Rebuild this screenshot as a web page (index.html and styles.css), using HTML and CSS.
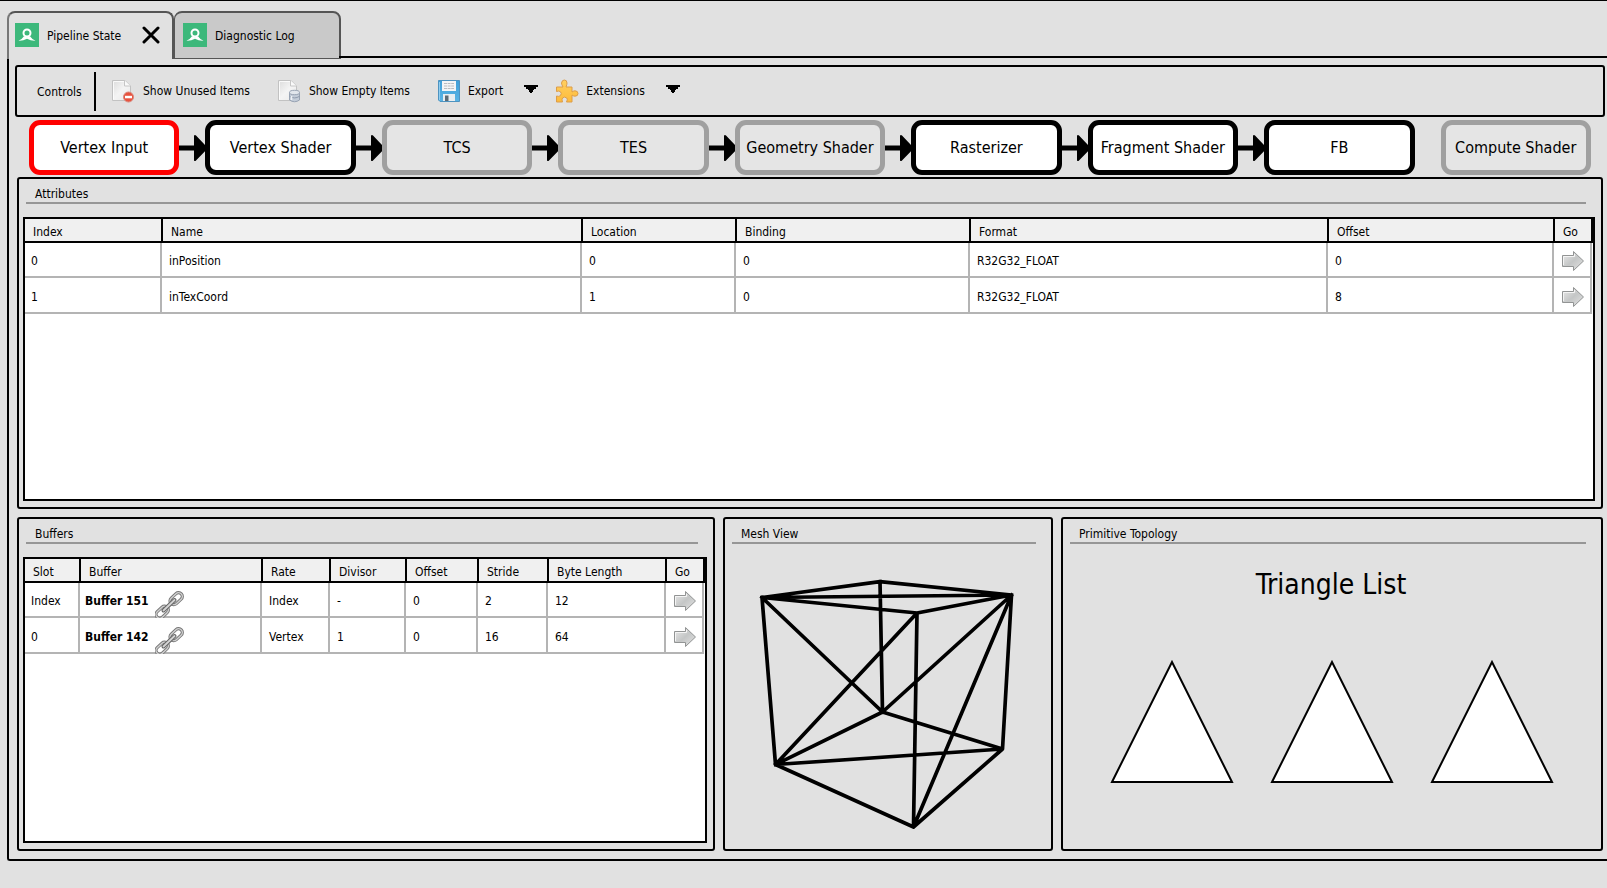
FILE: index.html
```html
<!DOCTYPE html>
<html lang="en">
<head>
<meta charset="utf-8">
<title>Pipeline State</title>
<link rel="stylesheet" href="styles.css">
</head>
<body class="app">
<svg class="defs" width="0" height="0" aria-hidden="true">
  <defs>
    <linearGradient id="page-fill" x1="0" y1="0" x2="1" y2="1">
      <stop offset="0" stop-color="#dcdcdc"/><stop offset=".5" stop-color="#f4f4f4"/><stop offset="1" stop-color="#e9e9e9"/>
    </linearGradient>
    <linearGradient id="go-fill" x1="0" y1="0" x2="1" y2="1">
      <stop offset="0" stop-color="#ececec"/><stop offset=".5" stop-color="#c4c6c6"/><stop offset="1" stop-color="#e4e4e4"/>
    </linearGradient>
    <linearGradient id="puzzle-fill" x1="0" y1="0" x2="0" y2="1">
      <stop offset="0" stop-color="#ffd061"/><stop offset="1" stop-color="#fdbb3b"/>
    </linearGradient>
    <linearGradient id="disk-fill" x1="0" y1="0" x2="0" y2="1">
      <stop offset="0" stop-color="#3f9fd8"/><stop offset="1" stop-color="#5bb4e4"/>
    </linearGradient>
  </defs>
  <symbol id="logo" viewBox="0 0 24 24">
    <path fill="#3db87b" d="M0 0h24v24H0z"/>
    <circle cx="12" cy="10" r="3.500" fill="none" stroke="#fff" stroke-width="2"/>
    <path fill="#fff" d="M3.500 17.700Q7 16.500 9 13.300L12 14.300 15 13.300Q17 16.500 20.500 17.700 16 18 12 15.700 8 18 3.500 17.700z"/>
  </symbol>
  <symbol id="page" viewBox="0 0 24 24">
    <path d="M1.500 1.500H14L19.500 7V21.500H1.500z" fill="url(#page-fill)" stroke="#c2c2c2"/>
    <path d="M2.500 20.500V2.500H13.500" fill="none" stroke="#fff" opacity=".8"/>
    <path d="M13.500 1.500V7H19.500" fill="#fafafa" stroke="#c6c6c6"/>
  </symbol>
  <symbol id="go" viewBox="0 0 24 22">
    <path d="M1.500 5.500H12.500V1.500L22.500 11 12.500 20.500V16.500H1.500z" fill="url(#go-fill)" stroke="#929494" stroke-linejoin="round"/>
    <path d="M2.500 15V6.500H13.500V4" fill="none" stroke="#f4f4f4"/>
  </symbol>
  <symbol id="chain" viewBox="0 0 29 27">
    <g fill="none" stroke-linecap="round">
      <g transform="rotate(-43 21 7.500)">
        <rect x="14" y="4" width="14" height="7.500" rx="3.700" stroke="#777" stroke-width="3.200"/>
        <rect x="14" y="4" width="14" height="7.500" rx="3.700" stroke="#d0d0d0" stroke-width="1.400"/>
      </g>
      <g transform="rotate(-43 7 21)">
        <rect x="0" y="17.500" width="14" height="7.500" rx="3.700" stroke="#777" stroke-width="3.200"/>
        <rect x="0" y="17.500" width="14" height="7.500" rx="3.700" stroke="#d0d0d0" stroke-width="1.400"/>
      </g>
      <path d="M8.500 19.500L19.500 9" stroke="#666" stroke-width="4"/>
      <path d="M8.500 19.500L19.500 9" stroke="#d4d4d4" stroke-width="1.800"/>
    </g>
  </symbol>
  <symbol id="link-arrow" viewBox="0 0 26 28">
    <path d="M0 11.500H15V1.500Q16 .5 17 1.500L29 14 17 26.500Q16 27.500 15 26.500V16.500H0z"/>
  </symbol>
  <symbol id="caret" viewBox="0 0 14 8">
    <path d="M0 0H14V2H12V4H10V5H9V7H8V8H6V7H5V5H4V4H2V2H0z"/>
  </symbol>
</svg>

<nav class="tabs">
  <div class="tab tab-active">
    <svg class="logo"><use href="#logo"/></svg>
    <a class="tab-label" href="#pipeline">Pipeline State</a>
    <button class="close" aria-label="Close tab">
      <svg viewBox="0 0 18 18"><path d="M2 2L16 16M16 2L2 16" stroke="#000" stroke-width="3" stroke-linecap="round"/></svg>
    </button>
  </div>
  <div class="tab">
    <svg class="logo"><use href="#logo"/></svg>
    <a class="tab-label" href="#log">Diagnostic Log</a>
  </div>
</nav>

<main class="frame" id="pipeline">
  <div class="toolbar">
    <span class="toolbar-title">Controls</span>
    <button class="tool">
      <svg class="icon" viewBox="0 0 24 24"><use href="#page"/><circle cx="17.500" cy="18" r="5" fill="#e8533f" stroke="#d9897e"/><path d="M14 16.800H21V19.300H14z" fill="#fff"/></svg>
      Show Unused Items
    </button>
    <button class="tool">
      <svg class="icon" viewBox="0 0 24 24"><use href="#page"/><path d="M12.500 13.500V21Q17.500 24.500 22.500 21V13.500z" fill="#c3ccd8" stroke="#98a3b3"/><ellipse cx="17.500" cy="13.500" rx="5" ry="2.200" fill="#e1e6ec" stroke="#98a3b3"/><path d="M12.500 17.300Q17.500 20.500 22.500 17.300" fill="none" stroke="#8f9bad"/><path d="M14.500 17V21" stroke="#eef1f5" stroke-width="1.500"/></svg>
      Show Empty Items
    </button>
    <button class="tool tool-menu">
      <svg class="icon" viewBox="0 0 24 24"><path d="M1.500 1.500H22.500V22.500H3L1.500 21z" fill="url(#disk-fill)" stroke="#4e93c0"/><path d="M5 2H19V12H5z" fill="#f3f5f6"/><path d="M7 4.500H17M7 7H17M7 9.500H17" stroke="#b9bdc0" stroke-dasharray="3 .6"/><path d="M6 15H18V22H6z" fill="#e9eef1"/><path d="M8 16.500H11.500V22H8z" fill="#5d6a74"/><path d="M2.500 3V21" stroke="#8fcdf0"/></svg>
      Export
    </button>
    <button class="caret" aria-label="Export options"><svg><use href="#caret"/></svg></button>
    <button class="tool tool-menu">
      <svg class="icon" viewBox="0 0 24 24"><path d="M1.500 8H8Q6.500 5.500 6.500 4 7 1 9.300 1 12 1 12 4 12 5.500 11 8H17V13Q18.500 11.800 20 11.800 23 12 23 14.500 23 17.200 20 17.200 18.500 17.200 17 16V23H11.500Q13 20.500 11.800 19 9.500 17.200 7.500 19 6.500 20.500 7.500 23H1.500V17Q4 18 5.500 16.500 7 14.500 5.500 12.800 4 11.500 1.500 12.500z" fill="url(#puzzle-fill)" stroke="#dc9d4a" stroke-linejoin="round"/></svg>
      Extensions
    </button>
    <button class="caret" aria-label="Extension options"><svg><use href="#caret"/></svg></button>
  </div>

  <div class="stages">
    <button class="stage stage-selected">Vertex Input</button>
    <svg class="link"><use href="#link-arrow"/></svg>
    <button class="stage">Vertex Shader</button>
    <svg class="link"><use href="#link-arrow"/></svg>
    <button class="stage stage-off">TCS</button>
    <svg class="link"><use href="#link-arrow"/></svg>
    <button class="stage stage-off">TES</button>
    <svg class="link"><use href="#link-arrow"/></svg>
    <button class="stage stage-off">Geometry Shader</button>
    <svg class="link"><use href="#link-arrow"/></svg>
    <button class="stage">Rasterizer</button>
    <svg class="link"><use href="#link-arrow"/></svg>
    <button class="stage">Fragment Shader</button>
    <svg class="link"><use href="#link-arrow"/></svg>
    <button class="stage">FB</button>
    <span class="link"></span>
    <button class="stage stage-off">Compute Shader</button>
  </div>

  <div class="panels">
    <section class="panel panel-wide">
      <h2 class="panel-title">Attributes</h2>
      <div class="sheet">
        <table class="grid">
          <colgroup><col class="w137"><col><col class="w154"><col class="w234"><col class="w358"><col class="w226"><col class="w38"></colgroup>
          <thead><tr><th>Index</th><th>Name</th><th>Location</th><th>Binding</th><th>Format</th><th>Offset</th><th>Go</th></tr></thead>
          <tbody>
            <tr><td>0</td><td>inPosition</td><td>0</td><td>0</td><td>R32G32_FLOAT</td><td>0</td><td><button class="go" aria-label="Go to attribute 0"><svg><use href="#go"/></svg></button></td></tr>
            <tr><td>1</td><td>inTexCoord</td><td>1</td><td>0</td><td>R32G32_FLOAT</td><td>8</td><td><button class="go" aria-label="Go to attribute 1"><svg><use href="#go"/></svg></button></td></tr>
          </tbody>
        </table>
      </div>
    </section>

    <section class="panel">
      <h2 class="panel-title">Buffers</h2>
      <div class="sheet">
        <table class="grid">
          <colgroup><col class="w55"><col><col class="w68"><col class="w76"><col class="w72"><col class="w70"><col class="w118"><col class="w38"></colgroup>
          <thead><tr><th>Slot</th><th>Buffer</th><th>Rate</th><th>Divisor</th><th>Offset</th><th>Stride</th><th>Byte Length</th><th>Go</th></tr></thead>
          <tbody>
            <tr><td>Index</td><td><a class="resource" href="#buffer-151">Buffer 151<svg><use href="#chain"/></svg></a></td><td>Index</td><td>-</td><td>0</td><td>2</td><td>12</td><td><button class="go" aria-label="Go to buffer 151"><svg><use href="#go"/></svg></button></td></tr>
            <tr><td>0</td><td><a class="resource" href="#buffer-142">Buffer 142<svg><use href="#chain"/></svg></a></td><td>Vertex</td><td>1</td><td>0</td><td>16</td><td>64</td><td><button class="go" aria-label="Go to buffer 142"><svg><use href="#go"/></svg></button></td></tr>
          </tbody>
        </table>
      </div>
    </section>

    <section class="panel">
      <h2 class="panel-title">Mesh View</h2>
      <svg class="drawing" viewBox="0 0 316 286">
        <path transform="translate(-4 -13)" fill="none" stroke="#000" stroke-width="3.700" stroke-linejoin="round" stroke-linecap="square" d="M37 53.500L155 37.700 286.500 51 192 69 37 53.500 286.500 51M37 53.500L50.500 220.500 188.500 283 277.500 205 286.500 51 188.500 283 192 69 50.500 220.500 277.500 205 157.500 168 155 37.700M37 53.500L157.500 168 286.500 51M157.500 168L50.500 220.500"/>
      </svg>
    </section>

    <section class="panel">
      <h2 class="panel-title">Primitive Topology</h2>
      <p class="topology">Triangle List</p>
      <svg class="drawing" viewBox="0 0 528 240">
        <path fill="#fff" stroke="#000" stroke-width="2" d="M45 179L105 59 165 179zM205 179L265 59 325 179zM365 179L425 59 485 179z"/>
      </svg>
    </section>
  </div>
</main>
</body>
</html>
```
FILE: styles.css
```css
* { box-sizing: border-box; }

.app {
  margin: 0;
  min-height: 100vh;
  padding: 10px 0 27px 7px;
  border-top: 1px solid #000;
  display: flex;
  flex-direction: column;
  background: #e1e1e1;
  color: #000;
  font: 12px/16px "DejaVu Sans Condensed", "DejaVu Sans", sans-serif;
}

.defs { position: absolute; }

button {
  padding: 0;
  border: 0;
  background: none;
  color: inherit;
  font: inherit;
}

a { color: inherit; text-decoration: none; }

svg { display: block; flex: none; }

/* Tabs */
.tabs { display: flex; height: 48px; }

.tabs::after {
  content: "";
  flex: 1;
  margin: 0 0 1px -2px;
  border-bottom: 2px solid #000;
}

.tab {
  width: 167px;
  padding: 0 12px 1px 8px;
  display: flex;
  align-items: center;
  gap: 8px;
  border: 2px solid #555;
  border-left-width: 1px;
  border-bottom-width: 1px;
  border-radius: 8px 8px 0 0;
  background: #c9c9c9;
}

.tab-active {
  border-left-width: 2px;
  border-left-color: #777;
  border-bottom: 0;
  padding: 0 12px 2px 6px;
  background: #e1e1e1;
}

.tab-label { flex: 1; padding-top: 1px; }

.logo { width: 24px; height: 24px; }

.close, .close svg { width: 18px; height: 18px; }

/* Main frame */
.frame {
  flex: 1;
  display: flex;
  flex-direction: column;
  padding: 6px 2px 8px 6px;
  border: solid #000;
  border-width: 0 0 2px 2px;
  border-radius: 0 0 0 3px;
}

.toolbar {
  height: 52px;
  padding: 0 20px;
  display: flex;
  align-items: center;
  border: 2px solid #000;
  border-radius: 3px;
}

.toolbar-title {
  width: 59px;
  padding-top: 1px;
  line-height: 38px;
  border-right: 2px solid #000;
  margin-right: 15px;
}

.tool {
  display: flex;
  align-items: center;
  gap: 8px;
  margin-right: 27px;
  line-height: 18px;
}

.tool-menu { gap: 7px; margin-right: 21px; }

.icon { width: 24px; height: 24px; }

.caret { margin-right: 17px; padding-bottom: 4px; }

.caret svg { width: 14px; height: 8px; }

/* Pipeline stages */
.stages {
  display: flex;
  align-items: center;
  padding: 3px 14px 2px 14px;
}

.stage {
  flex: 1;
  height: 55px;
  border: 5px solid #000;
  border-radius: 11px;
  background: #fff;
  font-size: 16px;
  line-height: 24px;
  white-space: nowrap;
}

.stage-selected { border-color: #f00; }

.stage-off { border-color: #a0a0a0; background: #e5e5e5; }

.link { width: 26px; height: 28px; flex: none; }

/* Panels */
.panels {
  flex: 1;
  display: grid;
  grid-template-columns: 698fr 330fr 542fr;
  grid-template-rows: 332fr 334fr;
  gap: 8px;
  padding: 0 2px;
}

.panel {
  min-width: 0;
  display: flex;
  flex-direction: column;
  padding: 0 6px 6px 4px;
  border: 2px solid #000;
  border-radius: 3px;
}

.panel-wide { grid-column: 1 / -1; }

.panel-title {
  margin: 0 9px 13px 3px;
  padding: 8px 0 0 9px;
  border-bottom: 2px solid #969696;
  font-size: 12px;
  font-weight: normal;
  line-height: 15px;
}

.sheet {
  flex: 1;
  border: 2px solid #000;
  background: #fff;
}

.grid {
  width: calc(100% - 1px);
  table-layout: fixed;
  border-collapse: separate;
  border-spacing: 0;
}

.grid th {
  height: 24px;
  padding: 3px 6px 0 8px;
  border: solid #000;
  border-width: 0 1px 2px;
  background: #f0f0f0;
  font-weight: normal;
  text-align: left;
}

.grid th:first-child { border-left: 0; }

.grid th:last-child { box-shadow: 1px 0 #000; }

.grid td {
  height: 36px;
  padding: 3px 0 0 7px;
  border: solid #b4b4b4;
  border-width: 0 2px 2px 0;
}

.grid td:first-child { padding-left: 6px; }

.grid tr:first-child td { height: 35px; padding-top: 2px; }

.w38 { width: 38px; }
.w55 { width: 55px; }
.w68 { width: 68px; }
.w70 { width: 70px; }
.w72 { width: 72px; }
.w76 { width: 76px; }
.w118 { width: 118px; }
.w137 { width: 137px; }
.w154 { width: 154px; }
.w226 { width: 226px; }
.w234 { width: 234px; }
.w358 { width: 358px; }

.go { display: block; }

.go svg { width: 24px; height: 22px; }

.resource {
  display: flex;
  gap: 6px;
  height: 27px;
  margin: 6px 0 -2px -2px;
  font-weight: bold;
  line-height: 20px;
}

.resource svg { width: 29px; height: 27px; }

.drawing { flex: 1 1 0; min-height: 0; width: 100%; }

.topology {
  margin: 10px 0 0;
  font-size: 28px;
  line-height: 36px;
  text-align: center;
}
```
